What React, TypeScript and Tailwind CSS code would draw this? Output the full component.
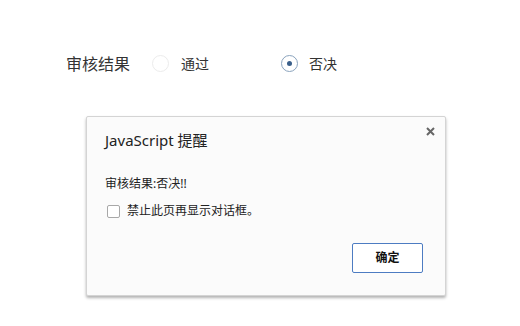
export default function App() {
    return (
        <div className="w-[520px] h-[326px] bg-white overflow-hidden [font-family:'Noto_Sans','Noto_Sans_CJK_SC',sans-serif]">
            {/* 审核结果 row */}
            <div className="flex items-center pl-[66px] pt-[51px] h-[76px]">
                <span className="text-[16px] text-[#333] leading-[22px]">审核结果</span>
                <span className="ml-[22px] w-[17px] h-[17px] rounded-full border border-[#ececec] bg-white"></span>
                <span className="ml-[12px] text-[14px] text-[#333]">通过</span>
                <span className="ml-[72px] w-[17px] h-[17px] rounded-full border border-[#8aa3bd] bg-white flex items-center justify-center">
                    <span className="w-[5px] h-[5px] rounded-full bg-[#3a5f8a]"></span>
                </span>
                <span className="ml-[11px] text-[14px] text-[#333]">否决</span>
            </div>

            {/* alert dialog */}
            <div className="ml-[86px] mt-[40px] w-[360px] h-[180px] bg-[#fbfbfb] border border-[#d4d4d4] rounded-[2px] shadow-[0_2px_3px_rgba(0,0,0,0.3)] flex flex-col">
                <div className="flex items-start justify-between pl-[18px] pr-[10px] pt-[11px]">
                    <span className="text-[15px] text-[#222] leading-[22px] mt-[1px]">JavaScript 提醒</span>
                    <svg width="9" height="9" viewBox="0 0 9 9" className="-mt-[1px]">
                        <path d="M1 1L8 8M8 1L1 8" stroke="#666" strokeWidth="2" />
                    </svg>
                </div>
                <div className="pl-[18px] mt-[24px] text-[12px] text-[#222] leading-[18px]">审核结果:否决!!</div>
                <div className="pl-[20px] mt-[9px] flex items-center">
                    <span className="w-[13px] h-[13px] border border-[#a8a8a8] rounded-[2px] bg-white"></span>
                    <span className="ml-[7px] text-[12px] text-[#222] leading-[18px]">禁止此页再显示对话框。</span>
                </div>
                <div className="flex justify-end pr-[22px] mt-auto mb-[22px]">
                    <button className="w-[71px] h-[30px] border border-[#4d7cc2] rounded-[2px] bg-white text-[12px] text-[#111] font-bold">
                        确定
                    </button>
                </div>
            </div>
        </div>
    );
}
